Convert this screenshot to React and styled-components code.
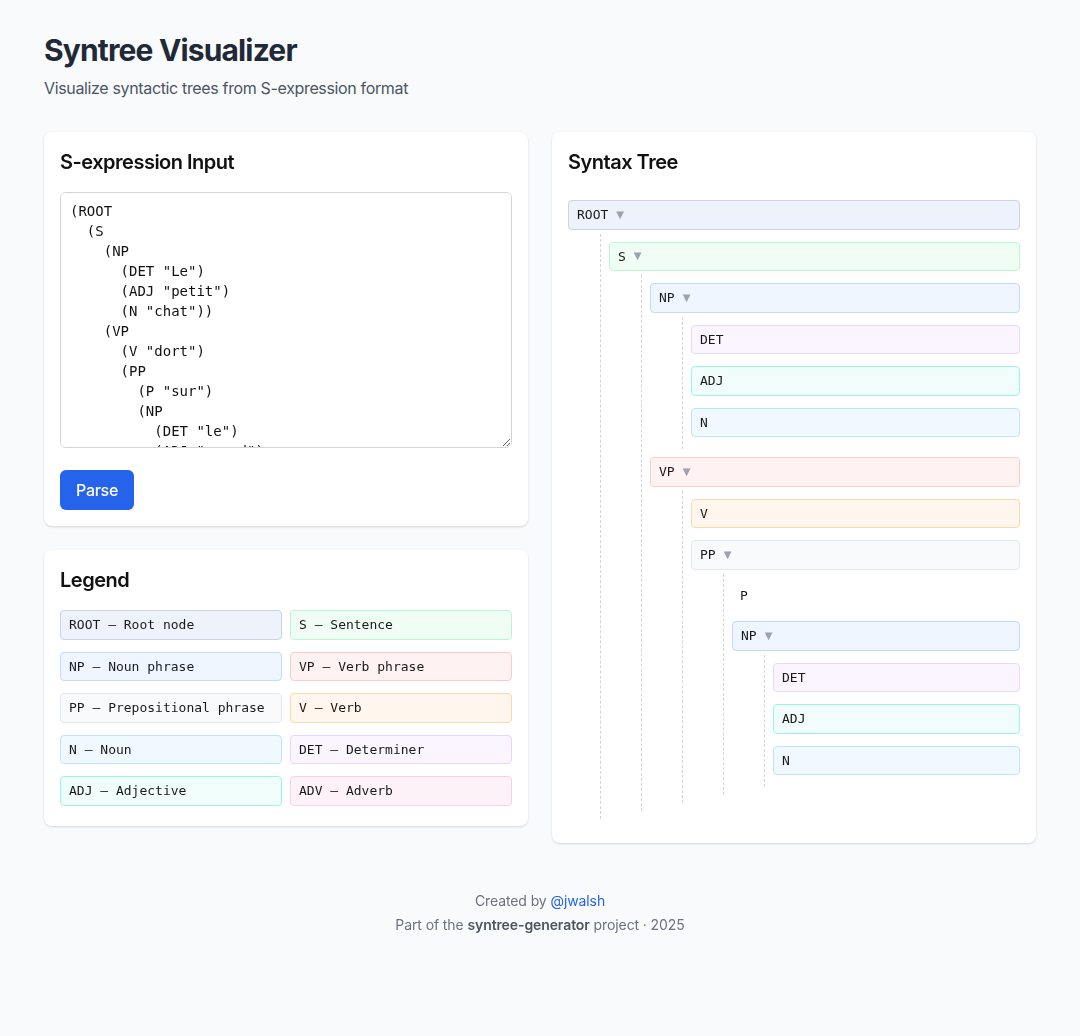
import React from "react";
import styled, { createGlobalStyle } from "styled-components";

const GlobalStyle = createGlobalStyle`
  html, body { margin: 0; padding: 0; background: #f9fafb; }
  body { font-family: Inter, "Noto Sans", "Liberation Sans", sans-serif; color: #111827; }
  * { box-sizing: border-box; }
`;

const MONO = `"DejaVu Sans Mono", "Liberation Mono", monospace`;

const palette = {
  ROOT: { bg: "#eef2fb", border: "#c9d3e4" },
  S: { bg: "#f0fdf4", border: "#bbf7d0" },
  NP: { bg: "#eff6ff", border: "#bfdbfe" },
  VP: { bg: "#fef2f2", border: "#fecaca" },
  PP: { bg: "#f8fafc", border: "#e2e8f0" },
  V: { bg: "#fff7ed", border: "#fed7aa" },
  N: { bg: "#f0f9ff", border: "#bae6fd" },
  DET: { bg: "#faf5ff", border: "#e9d5ff" },
  ADJ: { bg: "#f0fdfa", border: "#99f6e4" },
  ADV: { bg: "#fdf2f8", border: "#fbcfe8" },
};

const Page = styled.div`
  max-width: 992px;
  margin: 0 auto;
  padding: 30px 0 80px;
`;

const Title = styled.h1`
  margin: 0;
  font-size: 30px;
  line-height: 40px;
  font-weight: 700;
  color: #1f2937;
  letter-spacing: -0.85px;
`;

const Subtitle = styled.p`
  margin: 6px 0 0;
  font-size: 16px;
  line-height: 24px;
  color: #4b5563;
  letter-spacing: -0.35px;
`;

const Grid = styled.div`
  display: grid;
  grid-template-columns: 1fr 1fr;
  gap: 24px;
  margin-top: 32px;
  align-items: start;
`;

const Column = styled.div`
  display: flex;
  flex-direction: column;
  gap: 24px;
`;

const Card = styled.section`
  background: #ffffff;
  border-radius: 8px;
  box-shadow: 0 1px 3px rgba(0, 0, 0, 0.1), 0 1px 2px rgba(0, 0, 0, 0.06);
  padding: 16px 16px ${(p) => p.$pb || 16}px;
`;

const CardTitle = styled.h2`
  margin: 0 0 16px;
  font-size: 20px;
  line-height: 28px;
  font-weight: 600;
  color: #111111;
  letter-spacing: -0.5px;
`;

const TextArea = styled.textarea`
  display: block;
  width: 100%;
  height: 256px;
  padding: 8px 9px;
  border: 1px solid #d1d5db;
  border-radius: 6px;
  font-family: ${MONO};
  font-size: 14px;
  line-height: 20px;
  color: #111111;
  background: #fff;
  resize: vertical;
  outline: none;
`;

const ParseButton = styled.button`
  margin-top: 22px;
  height: 40px;
  padding: 0 16px;
  border: none;
  border-radius: 6px;
  background: #2563eb;
  color: #ffffff;
  font-family: Inter, "Liberation Sans", sans-serif;
  font-size: 16px;
  font-weight: 500;
  letter-spacing: -0.3px;
  cursor: pointer;
`;

const LegendGrid = styled.div`
  display: grid;
  grid-template-columns: 1fr 1fr;
  gap: 12px 8px;
`;

const LegendItem = styled.div`
  padding: 6px 8px;
  border: 1px solid ${(p) => palette[p.$tag].border};
  background: ${(p) => palette[p.$tag].bg};
  border-radius: 4px;
  font-family: ${MONO};
  font-size: 13px;
  line-height: 15.5px;
  color: #1a1a1a;
  white-space: nowrap;
`;

const Tree = styled.div`
  margin-top: 24px;
`;

const NodeWrap = styled.div`
  display: flex;
  flex-direction: column;
  margin-bottom: 8px;
`;

const NodeBox = styled.div`
  display: flex;
  align-items: center;
  margin-bottom: 4px;
  padding: 6px 8px;
  border: ${(p) => (p.$plain ? "none" : `1px solid ${palette[p.$tag]?.border || "#e5e7eb"}`)};
  background: ${(p) => (p.$plain ? "transparent" : palette[p.$tag]?.bg || "#fff")};
  border-radius: 4px;
  font-family: ${MONO};
  font-size: 13px;
  line-height: 15.5px;
  color: #1a1a1a;
`;

const Caret = styled.span`
  margin-left: 8px;
  font-size: 10px;
  line-height: 10px;
  color: #9ca3af;
  font-family: "DejaVu Sans", sans-serif;
`;

const Children = styled.div`
  display: flex;
  flex-direction: column;
  margin-left: 32px;
  padding: 8px 0 0 8px;
  border-left: 1px dashed #d1d5db;
`;

const Footer = styled.footer`
  margin-top: 46px;
  text-align: center;
  font-size: 14px;
  line-height: 24px;
  color: #6b7280;
  letter-spacing: -0.1px;
`;

const Link = styled.a`
  color: #2563eb;
  text-decoration: none;
`;

const Strong = styled.strong`
  font-weight: 600;
  color: #4b5563;
`;

const SEXPR = `(ROOT
  (S
    (NP
      (DET "Le")
      (ADJ "petit")
      (N "chat"))
    (VP
      (V "dort")
      (PP
        (P "sur")
        (NP
          (DET "le")
          (ADJ "grand")
          (N "tapis")))))))`;

const treeData = {
  tag: "ROOT",
  children: [
    {
      tag: "S",
      children: [
        { tag: "NP", children: [{ tag: "DET" }, { tag: "ADJ" }, { tag: "N" }] },
        {
          tag: "VP",
          children: [
            { tag: "V" },
            {
              tag: "PP",
              children: [
                { tag: "P", plain: true },
                { tag: "NP", children: [{ tag: "DET" }, { tag: "ADJ" }, { tag: "N" }] },
              ],
            },
          ],
        },
      ],
    },
  ],
};

function TreeNode({ node }) {
  const hasChildren = node.children && node.children.length > 0;
  return (
    <NodeWrap>
      <NodeBox $tag={node.tag} $plain={node.plain}>
        {node.tag}
        {hasChildren && <Caret>▼</Caret>}
      </NodeBox>
      {hasChildren && (
        <Children>
          {node.children.map((c, i) => (
            <TreeNode key={i} node={c} />
          ))}
        </Children>
      )}
    </NodeWrap>
  );
}

const legend = [
  ["ROOT", "ROOT – Root node"],
  ["S", "S – Sentence"],
  ["NP", "NP – Noun phrase"],
  ["VP", "VP – Verb phrase"],
  ["PP", "PP – Prepositional phrase"],
  ["V", "V – Verb"],
  ["N", "N – Noun"],
  ["DET", "DET – Determiner"],
  ["ADJ", "ADJ – Adjective"],
  ["ADV", "ADV – Adverb"],
];

export default function App() {
  return (
    <>
      <GlobalStyle />
      <Page>
        <Title>Syntree Visualizer</Title>
        <Subtitle>Visualize syntactic trees from S-expression format</Subtitle>
        <Grid>
          <Column>
            <Card>
              <CardTitle>S-expression Input</CardTitle>
              <TextArea defaultValue={SEXPR} spellCheck={false} />
              <ParseButton>Parse</ParseButton>
            </Card>
            <Card $pb={20}>
              <CardTitle>Legend</CardTitle>
              <LegendGrid>
                {legend.map(([tag, text]) => (
                  <LegendItem key={tag} $tag={tag}>
                    {text}
                  </LegendItem>
                ))}
              </LegendGrid>
            </Card>
          </Column>
          <Card $pb={16}>
            <CardTitle>Syntax Tree</CardTitle>
            <Tree>
              <TreeNode node={treeData} />
            </Tree>
          </Card>
        </Grid>
        <Footer>
          <div>
            Created by <Link href="#">@jwalsh</Link>
          </div>
          <div>
            Part of the <Strong>syntree-generator</Strong> project · 2025
          </div>
        </Footer>
      </Page>
    </>
  );
}
